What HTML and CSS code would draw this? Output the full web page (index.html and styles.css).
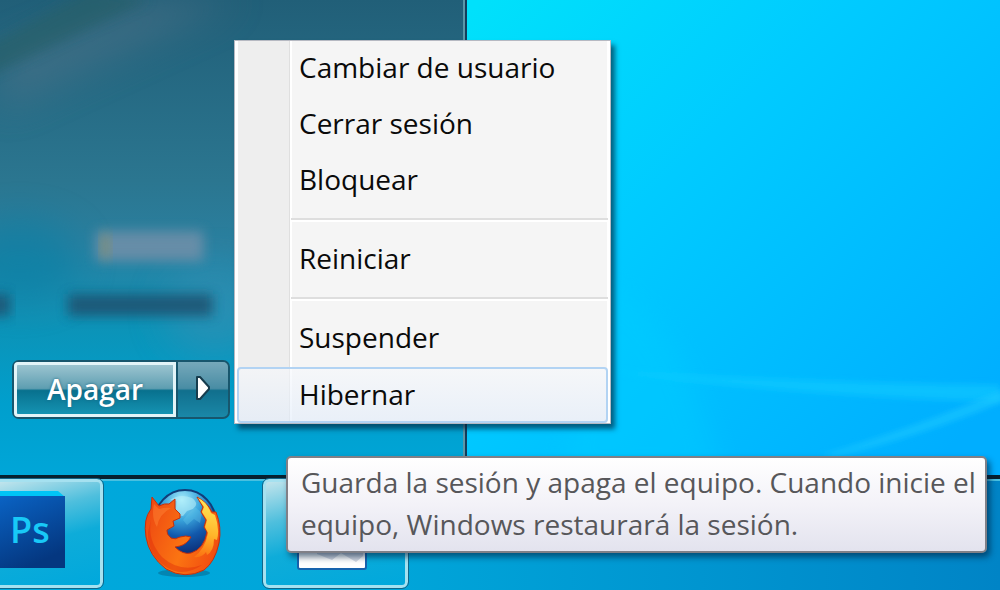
FILE: index.html
```html
<!DOCTYPE html>
<html lang="es">
<head>
    <meta charset="UTF-8">
    <meta name="viewport" content="width=device-width, initial-scale=1.0">
    <title>Escritorio</title>
    <link rel="stylesheet" href="styles.css">
</head>
<body>
    <div class="desktop">
        <!-- Fondo de pantalla -->
        <svg class="wallpaper" viewBox="0 0 1000 590" preserveAspectRatio="none" aria-hidden="true">
            <defs>
                <linearGradient id="sky" gradientUnits="userSpaceOnUse" x1="480" y1="0" x2="940" y2="460">
                    <stop offset="0" stop-color="#00e1fb"/>
                    <stop offset="0.4" stop-color="#00cbff"/>
                    <stop offset="1" stop-color="#00aeff"/>
                </linearGradient>
                <filter id="soft" x="-20%" y="-50%" width="140%" height="200%">
                    <feGaussianBlur stdDeviation="14"/>
                </filter>
                <filter id="fine" x="-20%" y="-50%" width="140%" height="200%">
                    <feGaussianBlur stdDeviation="3"/>
                </filter>
            </defs>
            <rect width="1000" height="590" fill="url(#sky)"/>
            <path d="M600 270 Q650 300 690 375 L725 480 H560 Z" fill="#00cfff" opacity="0.4" filter="url(#soft)"/>
            <path d="M600 370 Q780 382 1000 385 L1000 402 Q780 395 600 370 Z" fill="#12d0ff" opacity="0.5" filter="url(#fine)"/>
            <path d="M820 456 Q910 430 1010 388 L1010 398 Q920 436 835 456 Z" fill="#22ccff" opacity="0.6" filter="url(#fine)"/>
        </svg>

        <main class="workspace">
            <!-- Menú Inicio -->
            <section class="start-panel">
                <svg class="glass" viewBox="0 0 466 475" preserveAspectRatio="none" aria-hidden="true">
                    <defs>
                        <filter id="glow" x="-30%" y="-60%" width="160%" height="220%">
                            <feGaussianBlur stdDeviation="6"/>
                        </filter>
                        <filter id="haze" x="-60%" y="-60%" width="220%" height="220%">
                            <feGaussianBlur stdDeviation="18"/>
                        </filter>
                    </defs>
                    <path d="M0 55 L140 0 L240 0 L0 110 Z" fill="#52758a" opacity="0.5" filter="url(#haze)"/>
                    <path d="M-20 50 L90 -10 L150 0 L-20 80 Z" fill="#275f66" opacity="0.6" filter="url(#glow)"/>
                    <ellipse cx="20" cy="260" rx="60" ry="40" fill="#007fa6" opacity="0.5" filter="url(#haze)"/>
                    <ellipse cx="215" cy="310" rx="50" ry="45" fill="#3b8fb3" opacity="0.5" filter="url(#haze)"/>
                    <rect x="96" y="231" width="108" height="30" fill="#6d8fa9" opacity="0.9" filter="url(#glow)"/>
                    <rect x="101" y="234" width="9" height="24" fill="#87905f" opacity="0.6" filter="url(#glow)"/>
                    <rect x="68" y="294" width="145" height="22" fill="#1d5573" opacity="0.9" filter="url(#glow)"/>
                    <rect x="-10" y="294" width="20" height="22" fill="#1d5573" opacity="0.9" filter="url(#glow)"/>
                </svg>

                <div class="power">
                    <button type="button" class="power-button">Apagar</button>
                    <button type="button" class="power-arrow" aria-label="Más opciones" aria-expanded="true">
                        <svg width="18" height="26" viewBox="0 0 18 26" aria-hidden="true">
                            <path d="M3 2 H6 L15 12 V14 L6 24 H3 Z" fill="#fff" stroke="#173d4e" stroke-width="2" stroke-linejoin="round"/>
                        </svg>
                    </button>

                    <div class="menu" role="menu">
                        <button type="button" class="menu-item" role="menuitem">Cambiar de usuario</button>
                        <button type="button" class="menu-item" role="menuitem">Cerrar sesión</button>
                        <button type="button" class="menu-item" role="menuitem">Bloquear</button>
                        <hr class="separator">
                        <button type="button" class="menu-item" role="menuitem">Reiniciar</button>
                        <hr class="separator">
                        <button type="button" class="menu-item" role="menuitem">Suspender</button>
                        <button type="button" class="menu-item selected" role="menuitem" aria-describedby="tip">Hibernar</button>
                        <div class="tooltip" id="tip" role="tooltip">Guarda la sesión y apaga el equipo. Cuando inicie el equipo, Windows restaurará la sesión.</div>
                    </div>
                </div>
            </section>
        </main>

        <!-- Barra de tareas -->
        <footer class="taskbar">
            <button type="button" class="task open first" aria-label="Photoshop">
                <svg width="66" height="82" viewBox="0 0 66 82" aria-hidden="true">
                    <defs>
                        <linearGradient id="ps" x1="0" y1="0" x2="0.4" y2="1">
                            <stop offset="0" stop-color="#0a63c4"/>
                            <stop offset="1" stop-color="#043780"/>
                        </linearGradient>
                    </defs>
                    <path d="M0 2 H58 L65 8 H0 Z" fill="#00c4f5"/>
                    <rect y="7" width="65" height="72" fill="url(#ps)"/>
                    <text class="ps-text" x="10" y="54">Ps</text>
                </svg>
            </button>
            <button type="button" class="task launcher" aria-label="Firefox">
                <svg width="78" height="90" viewBox="0 0 78 90" aria-hidden="true">
                    <defs>
                        <radialGradient id="globe" cx="0.45" cy="0.15" r="0.85">
                            <stop offset="0" stop-color="#a5ecfb"/>
                            <stop offset="0.35" stop-color="#3aa5dc"/>
                            <stop offset="0.65" stop-color="#1259ac"/>
                            <stop offset="1" stop-color="#0b2a72"/>
                        </radialGradient>
                        <linearGradient id="fox" x1="0" y1="0.3" x2="1" y2="0.7">
                            <stop offset="0" stop-color="#ee4a12"/>
                            <stop offset="0.55" stop-color="#fb7412"/>
                            <stop offset="1" stop-color="#f04a10"/>
                        </linearGradient>
                        <linearGradient id="tail" x1="0.5" y1="0" x2="0.4" y2="1">
                            <stop offset="0" stop-color="#ffe95a"/>
                            <stop offset="0.6" stop-color="#ffb52a"/>
                            <stop offset="1" stop-color="#fb7412"/>
                        </linearGradient>
                    </defs>
                    <ellipse cx="40" cy="84" rx="26" ry="4" fill="#05638a" opacity="0.5"/>
                    <ellipse cx="41" cy="34" rx="31" ry="33" fill="url(#globe)" stroke="#123d78" stroke-width="2"/>
                    <path d="M26 11 Q36 4 48 9 Q56 15 49 20 L43 22 L39 27 L31 26 L33 12 Z" fill="#b9f1fa" opacity="0.55"/>
                    <path d="M51 18 L58 24 L56 34 L50 30 L43 36 L39 31 L44 25 Z" fill="#68c8ec" opacity="0.35"/>
                    <path d="M8 8 L15 17 Q21 14 25 15 L31 10 L31 20 L36 25 L36 29 L29 32 L30 37 L23 41 Q22 45 27 49 Q31 51 36 48 Q42 46 47 48 Q43 55 36 57 L31 58 Q39 66 47 64 Q60 60 63 43 L60 38 L62 31 L57 23 L59 18 L53 8 Q63 13 68 23 L72 23 Q78 38 75 54 Q71 73 60 81 Q41 91 22 80 Q5 67 2 48 Q-1 30 7 20 Z" fill="url(#fox)" stroke="#c5300d" stroke-width="1" stroke-linejoin="round"/>
                    <path d="M54 9 Q63 13 67 24 L71 26 Q76 40 73 51 L70 50 Q70 62 63 66 L62 63 Q58 69 50 68 Q61 60 64 44 L61 38 L63 31 L58 23 L60 18 Z" fill="url(#tail)"/>
                    <path d="M7 31 Q3 51 18 68 Q36 84 58 76 Q39 89 22 78 Q3 65 4 43 Z" fill="#df2e0b" opacity="0.45"/>
                    <path d="M10 15 L15 20 Q22 18 27 19 Q15 25 13 38 Q7 29 10 15 Z" fill="#ff8738" opacity="0.45"/>
                </svg>
            </button>
            <button type="button" class="task open window" aria-label="Ventana">
                <svg width="70" height="70" viewBox="0 0 70 70" aria-hidden="true">
                    <rect x="1" y="1" width="68" height="68" rx="2" fill="#fff" stroke="#1763ae" stroke-width="2"/>
                    <path d="M20 54 L35 60 L44 53 L59 62 L66 56 V50 H20 Z" fill="#b7bfd2" opacity="0.6"/>
                </svg>
            </button>
        </footer>
    </div>
</body>
</html>
```
FILE: styles.css
```css
* {
    margin: 0;
    padding: 0;
    box-sizing: border-box;
}

body {
    font-family: 'Open Sans', 'Noto Sans', sans-serif;
    font-size: 28px;
    overflow: hidden;
}

button {
    font: inherit;
    border: none;
    background: none;
    cursor: pointer;
}

svg {
    display: block;
}

.desktop {
    position: relative;
    display: flex;
    flex-direction: column;
    min-height: 100vh;
}

.wallpaper,
.glass {
    position: absolute;
    top: 0;
    left: 0;
    width: 100%;
    height: 100%;
}

.workspace {
    flex: 1;
    display: flex;
}

/* Menú Inicio */
.start-panel {
    position: relative;
    z-index: 2;
    width: 467px;
    display: flex;
    align-items: flex-end;
    padding: 0 12px 56px;
    background: linear-gradient(#215f78, #2b7690 38%, #2a80a0 52%, #0b94b9 70%, #009fcd 85%, #00a6d8);
    border-right: 2px solid #123e5c;
    box-shadow: inset -2px 0 #5b97a8;
}

/* Botón de apagado */
.power {
    position: relative;
    display: flex;
    width: 218px;
    height: 59px;
    border: 2px solid #17566d;
    border-radius: 7px;
    background: linear-gradient(#a3c9d4, #5e9eb1 48%, #08718e 52%, #1697b7);
}

.power-button {
    flex: 1;
    padding-bottom: 2px;
    border: 3px solid #e2f4f8;
    border-radius: 4px 0 0 4px;
    color: #fff;
    font-weight: 600;
    line-height: 46px;
    text-shadow: 0 0 3px #1b6680;
}

.power-arrow {
    width: 52px;
    padding-bottom: 4px;
    display: flex;
    align-items: center;
    justify-content: center;
    border-left: 2px solid #17566d;
    border-radius: 0 5px 5px 0;
    background: rgba(35, 110, 140, 0.35);
}

/* Menú desplegable */
.menu {
    position: absolute;
    left: calc(100% + 6px);
    bottom: -7px;
    width: 377px;
    border: 1px solid #b6b9c2;
    background: linear-gradient(90deg, #fff 3px, #eee 3px, #eee 54px, #dfdfdf 54px, #dfdfdf 55px, #fff 55px, #fff 57px, #f5f5f5 57px, #f5f5f5 372px, #fff 372px);
    box-shadow: 4px 5px 5px rgba(0, 35, 60, 0.65);
}

.menu-item {
    display: block;
    width: 100%;
    height: 56px;
    padding: 0 0 4px 64px;
    line-height: 50px;
    text-align: left;
    color: #0a0a0a;
}

.menu-item.selected {
    width: auto;
    min-width: calc(100% - 4px);
    margin: 0 2px;
    padding-left: 60px;
    border: 2px solid #b2d3f3;
    border-radius: 4px;
    background: linear-gradient(rgba(246, 248, 252, 0.6), rgba(225, 236, 250, 0.6));
}

.separator {
    height: 4px;
    margin: 9px 2px 10px 56px;
    border: none;
    border-top: 2px solid #dedede;
    background: #fff;
}

.tooltip {
    position: absolute;
    top: calc(100% + 33px);
    left: 51px;
    width: 701px;
    padding: 3px 4px 6px 13px;
    border: 2px solid #808087;
    border-radius: 5px;
    background: linear-gradient(#fff, #f3f2f8 50%, #e3e3ee);
    box-shadow: 3px 4px 6px rgba(0, 30, 60, 0.6);
    color: #57575a;
    line-height: 42px;
}

/* Barra de tareas */
.taskbar {
    position: relative;
    z-index: 1;
    display: flex;
    height: 115px;
    padding-bottom: 2px;
    border-top: 4px solid #06202f;
    background: linear-gradient(90deg, #00a9dc, #00a5d9 40%, #0095d0 70%, #0084c6);
    box-shadow: inset 0 2px #48bfe0;
}

.task {
    display: flex;
    align-items: center;
    justify-content: center;
}

.task.open {
    width: 145px;
    border: 3px solid #a5e1f0;
    border-radius: 6px;
    outline: 1px solid #116689;
    background: linear-gradient(165deg, #c1e4ec, #4fbfdd 30%, #0eacd9 55%, #00a8dc);
}

.task.first {
    width: 103px;
    padding-bottom: 8px;
    border-left: none;
    border-radius: 0 6px 6px 0;
    justify-content: flex-start;
}

.task.launcher {
    width: 160px;
}

.task.window {
    align-items: flex-end;
    padding: 0 8px 15px 0;
}

.ps-text {
    font-size: 36px;
    font-weight: 600;
    fill: #18c9f7;
}
```
